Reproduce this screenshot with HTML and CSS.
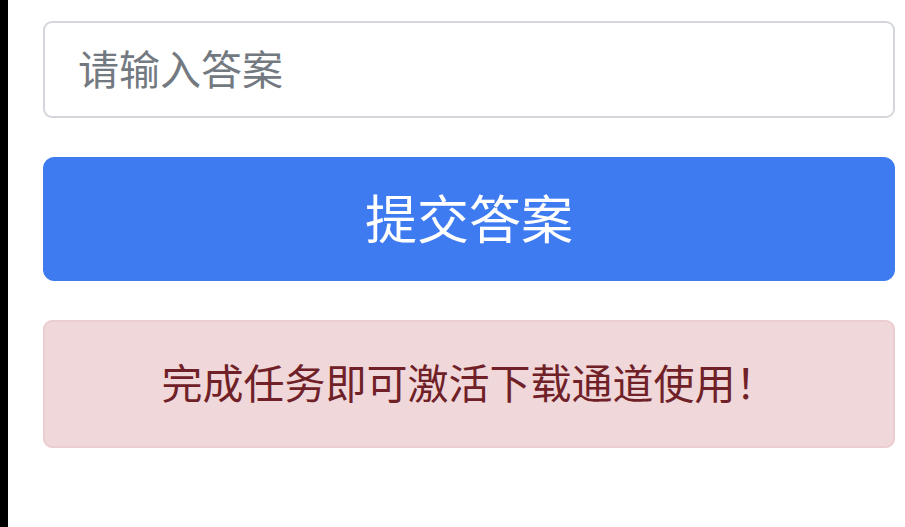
FILE: index.html
```html
<!DOCTYPE html>
<html lang="zh-CN">
<head>
<meta charset="utf-8">
<title>提交答案</title>
<link rel="stylesheet" href="styles.css">
</head>
<body>
<div class="page">
  <div class="edge"></div>
  <main class="content">
    <input class="answer" type="text" placeholder="请输入答案">
    <button class="submit" type="button">提交答案</button>
    <div class="alert">完成任务即可激活下载通道使用！</div>
  </main>
</div>
</body>
</html>
```

FILE: styles.css
```css
html, body {
  margin: 0;
  padding: 0;
  background: #ffffff;
}

body {
  font-family: "Noto Sans CJK SC", "Noto Sans", sans-serif;
}

.page {
  display: flex;
  width: 905px;
  height: 527px;
  overflow: hidden;
}

.edge {
  width: 8px;
  flex: 0 0 8px;
  background: #000000;
}

.content {
  flex: 1;
  display: flex;
  flex-direction: column;
  gap: 39px;
  padding: 21px 10px 0 35px;
}

.answer {
  box-sizing: border-box;
  height: 97px;
  width: 100%;
  margin: 0;
  border: 2px solid #d3d6da;
  border-radius: 9px;
  padding: 0 0 5px 33px;
  font-family: inherit;
  font-size: 41px;
  color: #495057;
  background: #ffffff;
  outline: none;
}

.answer::placeholder {
  color: #737980;
}

.submit {
  box-sizing: border-box;
  height: 124px;
  width: 100%;
  margin: 0;
  border: 1px solid #3d7bef;
  border-radius: 11px;
  background: #3e7bf1;
  color: #ffffff;
  font-family: inherit;
  font-size: 52px;
  line-height: 1;
  padding: 0 0 4px;
}

.alert {
  box-sizing: border-box;
  height: 128px;
  border: 2px solid #ebcdd1;
  border-radius: 9px;
  background: #efd7da;
  color: #6f2127;
  font-size: 41px;
  display: flex;
  align-items: center;
  justify-content: center;
  padding-bottom: 6px;
}
```
